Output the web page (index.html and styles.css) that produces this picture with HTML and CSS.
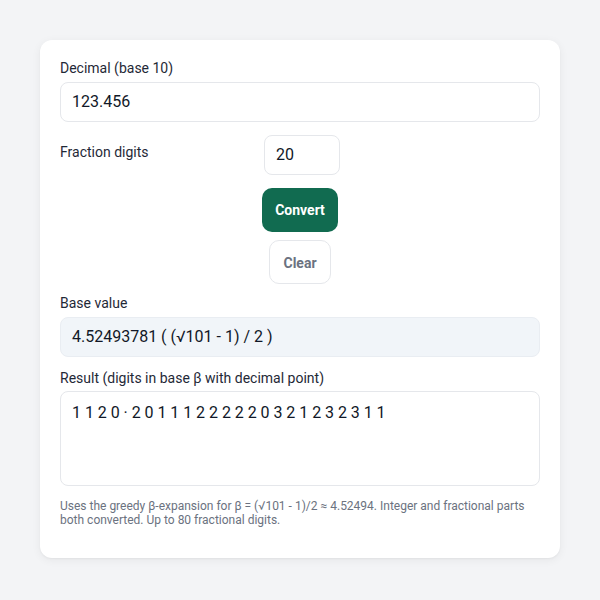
FILE: index.html
```html
<!DOCTYPE html>
<html>
<head>
<meta charset="utf-8">
<link rel="stylesheet" href="styles.css">
</head>
<body>
<main class="card">
  <label class="label">Decimal (base 10)</label>
  <div class="field">123.456</div>

  <div class="frac-row">
    <span class="label frac-label">Fraction digits</span>
    <div class="field small-field">20</div>
  </div>

  <div class="actions">
    <button class="btn primary">Convert</button>
    <button class="btn secondary">Clear</button>
  </div>

  <label class="label base-label">Base value</label>
  <div class="field readonly">4.52493781 ( (√101 - 1) / 2 )</div>

  <label class="label result-label">Result (digits in base β with decimal point)</label>
  <div class="field result">1120·20111222220321232311</div>

  <p class="note">Uses the greedy β-expansion for β = (√101 - 1)/2 ≈ 4.52494. Integer and fractional parts both converted. Up to 80 fractional digits.</p>
</main>
</body>
</html>
```
FILE: styles.css
```css
* { box-sizing: border-box; }
html, body { margin: 0; padding: 0; }
body {
  background: #f3f4f6;
  font-family: Roboto, "Liberation Sans", sans-serif;
  color: #1f2937;
  padding: 40px;
}
.card {
  background: #ffffff;
  border-radius: 12px;
  box-shadow: 0 2px 10px rgba(0, 0, 0, 0.06), 0 1px 2px rgba(0,0,0,0.04);
  padding: 18px 20px 30px;
  height: 518px;
  display: flex;
  flex-direction: column;
}
.label {
  display: block;
  font-size: 14px;
  line-height: 20px;
  color: #1f2937;
  margin-bottom: 4px;
}
.field {
  height: 40px;
  border: 1px solid #e5e7eb;
  border-radius: 8px;
  padding: 0 11px;
  font-size: 16px;
  line-height: 38px;
  color: #111827;
  background: #fff;
}
.frac-row {
  display: flex;
  align-items: flex-start;
  margin-top: 13px;
}
.frac-label {
  width: 204px;
  padding-top: 7px;
  margin-bottom: 0;
}
.small-field {
  width: 76px;
  padding: 0 11px;
}
.actions {
  display: flex;
  flex-direction: column;
  align-items: center;
  margin-top: 13px;
  gap: 8px;
}
.btn {
  font-family: Roboto, "Liberation Sans", sans-serif;
  font-size: 14px;
  font-weight: 700;
  line-height: 20px;
  border-radius: 10px;
  padding: 12px 12px;
  cursor: pointer;
}
.primary {
  background: #116b50;
  color: #ffffff;
  border: none;
  width: 76px;
  height: 44px;
}
.secondary {
  background: #ffffff;
  color: #6b7280;
  border: 1px solid #e5e7eb;
  width: 62px;
  height: 44px;
  margin-left: 0;
}
.base-label { margin-top: 9px; }
.readonly {
  background: #f1f5f9;
  border-color: #e9edf2;
}
.result-label { margin-top: 11px; margin-bottom: 3px; }
.result {
  height: 95px;
  line-height: 24px;
  padding-top: 9px;
  letter-spacing: 3.9px;
}
.note {
  margin: 13px 0 0;
  font-size: 12px;
  line-height: 14px;
  color: #6b7280;
}
```
